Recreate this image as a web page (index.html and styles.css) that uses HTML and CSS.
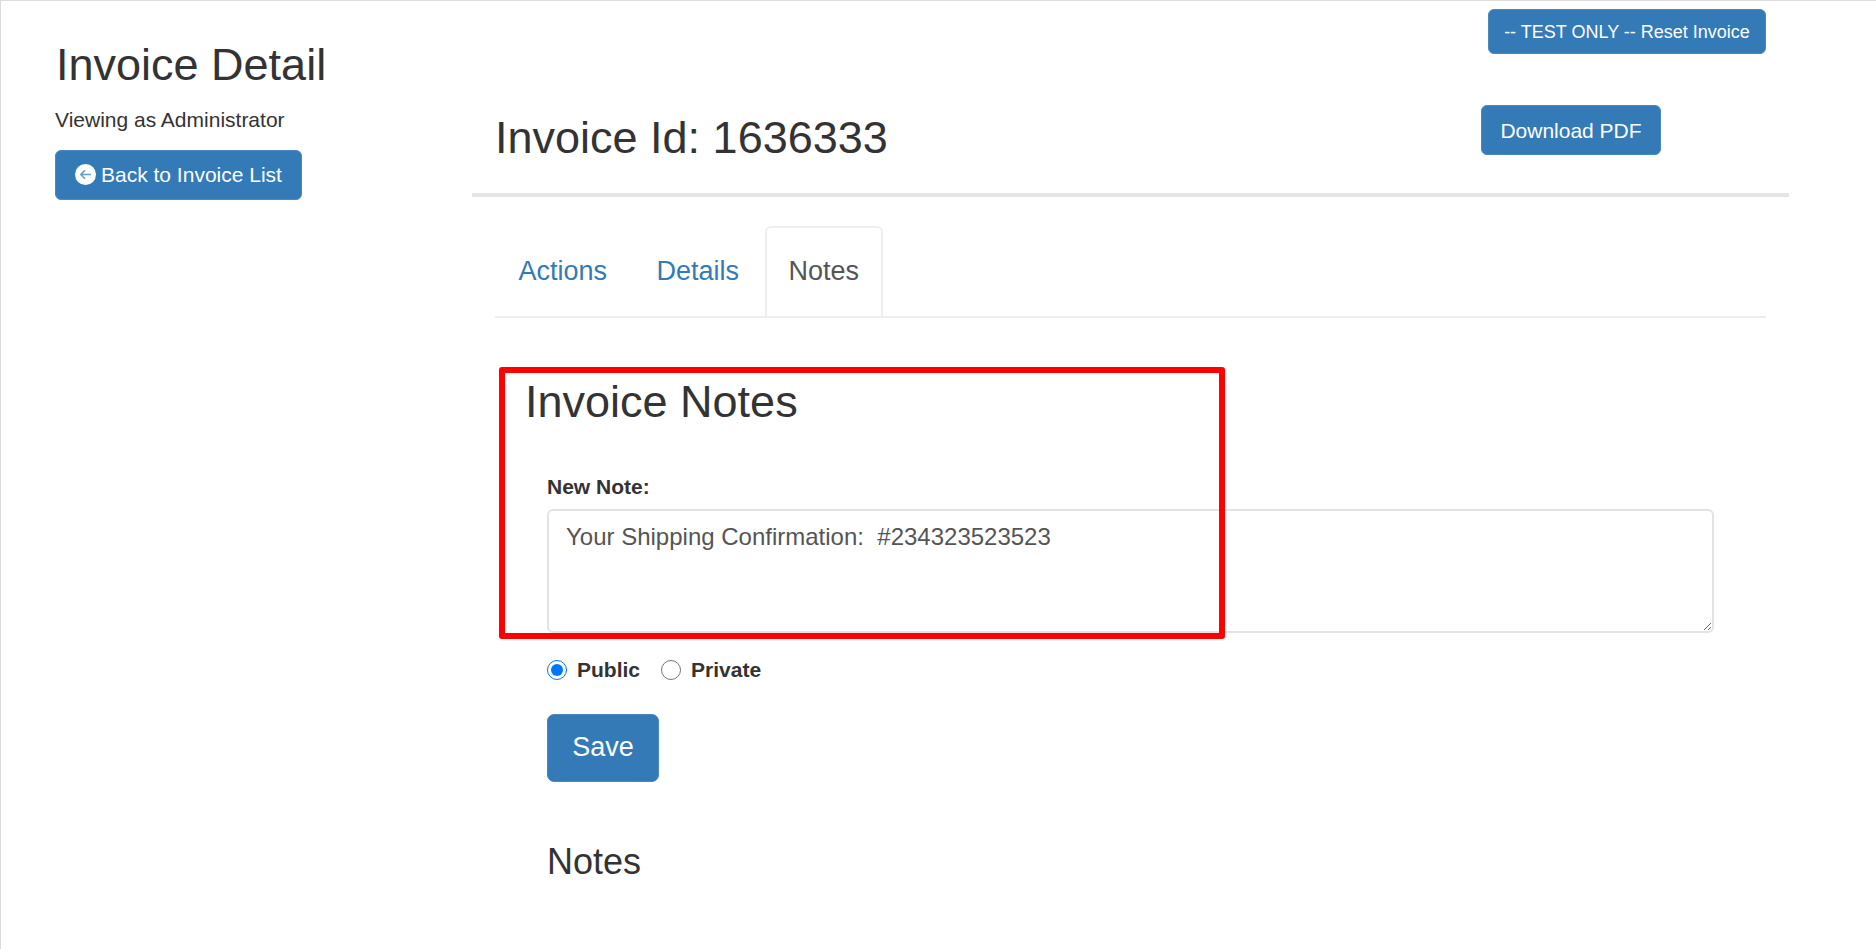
FILE: index.html
```html
<!doctype html>
<html lang="en">
<head>
	<meta charset="UTF-8">
	<title>Invoice Detail</title>
	<link rel="stylesheet" href="styles.css">
</head>
<body>
	<div id="container">
		<div class="left">
			<h1>Invoice Detail</h1>
			<p class="viewing">Viewing as Administrator</p>
			<a class="btn btn-back" href="#">
				<svg class="back-icon" width="21" height="21" viewBox="0 0 21 21"><circle cx="10.5" cy="10.5" r="10.5" fill="#fff"/><path d="M16 10.5H6M10 6.2l-4.2 4.3 4.2 4.3" fill="none" stroke="#6a9ccb" stroke-width="1.6"/></svg>
				Back to Invoice List
			</a>
		</div>
		<div class="right">
			<div class="test-row"><a class="btn btn-test" href="#">-- TEST ONLY -- Reset Invoice</a></div>
			<div class="title-row">
				<h2>Invoice Id: 1636333</h2>
				<a class="btn btn-pdf" href="#">Download PDF</a>
			</div>
			<div class="panel">
				<ul class="tabs">
					<li><a href="#">Actions</a></li>
					<li><a href="#">Details</a></li>
					<li class="active"><a href="#">Notes</a></li>
				</ul>
				<h3>Invoice Notes</h3>
				<form class="note-form">
					<label class="note-label" for="note">New Note:</label>
					<textarea id="note">Your Shipping Confirmation:  #234323523523</textarea>
					<div class="radios">
						<input type="radio" name="vis" id="pub" checked>
						<label for="pub">Public</label>
						<input type="radio" name="vis" id="pri">
						<label for="pri">Private</label>
					</div>
					<a class="btn btn-save" href="#">Save</a>
					<h4>Notes</h4>
				</form>
			</div>
		</div>
	</div>
	<div class="highlight"></div>
</body>
</html>
```

FILE: styles.css
```css
html,body{margin: 0;padding: 0;height: 100%;}
body{font-family: "Liberation Sans",Arial,sans-serif;color: #333;background: #fff;overflow: hidden;}
h1,h2,h3,h4,p,ul{margin: 0;padding: 0;font-weight: 400;}
ul,li{list-style: none;}
a{text-decoration: none;}
#container{display: flex;border-top: 1px solid #ddd;border-left: 1px solid #ddd;box-sizing: border-box;height: 949px;}
.left{width: 471px;padding: 40px 0 0 54px;box-sizing: border-box;flex: none;}
.left h1{font-size: 45px;line-height: 47px;margin-left: 1px;}
.viewing{font-size: 21px;line-height: 28px;margin-top: 18px;}
.btn{display: inline-block;background: #337ab7;border: 1px solid #4a88bf;color: #fff;border-radius: 6px;box-sizing: border-box;text-align: center;white-space: nowrap;}
.btn-back{display: flex;align-items: center;gap: 5px;width: 247px;height: 50px;font-size: 21px;padding-left: 19px;margin-top: 16px;}
.back-icon{margin-top: -2px;}
.right{width: 1317px;flex: none;}
.test-row{display: flex;justify-content: flex-end;padding: 8px 23px 0 0;}
.btn-test{width: 278px;height: 45px;line-height: 44px;font-size: 18px;}
.title-row{display: flex;justify-content: space-between;align-items: flex-start;border-bottom: 4px solid #e5e5e5;box-sizing: border-box;padding: 51px 128px 0 23px;height: 143px;}
.title-row h2{font-size: 45px;line-height: 50px;margin-top: 8px;}
.btn-pdf{width: 180px;height: 50px;line-height: 49px;font-size: 21px;}
.panel{padding: 29px 23px 0;}
.tabs{display: flex;border-bottom: 2px solid #eee;height: 90px;}
.tabs li{margin-bottom: -2px;}
.tabs a{display: block;font-size: 27px;line-height: 86px;height: 90px;padding: 0 21.5px;color: #337ab7;border: 2px solid transparent;border-bottom: 0;box-sizing: border-box;margin-right: 2.5px;}
.tabs .active a{color: #555;background: #fff;border-color: #eee;border-radius: 6px 6px 0 0;}
.panel h3{font-size: 45px;line-height: 50px;margin: 59px 0 0 30px;}
.note-form{padding: 0 52px;}
.note-label{display: block;font-size: 21px;font-weight: 700;line-height: 28px;margin-top: 46px;}
textarea{display: block;width: 100%;height: 124px;box-sizing: border-box;margin-top: 8px;padding: 9px 17px;border: 2px solid #e3e3e3;border-radius: 6px;font-family: inherit;font-size: 24px;line-height: 34px;color: #555;outline: 0;}
.radios{display: flex;align-items: center;height: 28px;margin-top: 23px;font-size: 21px;font-weight: 700;}
.radios input{width: 20px;height: 20px;margin: 0 10px 0 0;accent-color: #0075ff;}
.radios label{margin-right: 21px;}
.btn-save{display: block;width: 112px;height: 68px;line-height: 65px;font-size: 27px;margin-top: 30px;border-radius: 7px;}
.note-form h4{font-size: 36px;line-height: 40px;margin-top: 60px;}
.highlight{position: absolute;left: 499px;top: 367px;width: 726px;height: 272px;box-sizing: border-box;border: 6px solid #f00;border-radius: 3px;}
```
